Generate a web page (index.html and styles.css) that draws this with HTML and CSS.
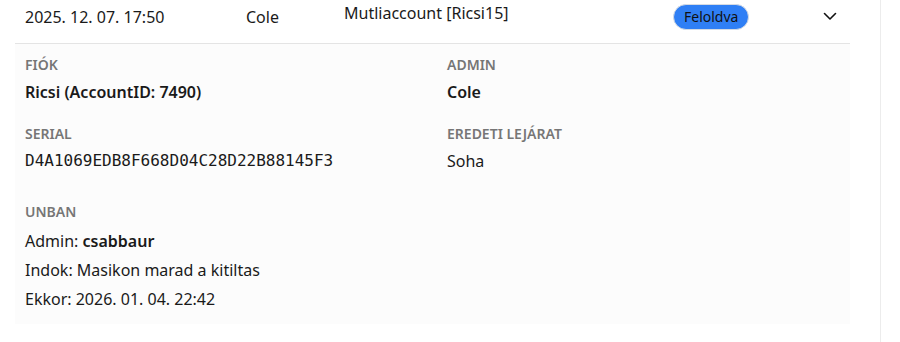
FILE: index.html
```html
<!DOCTYPE html>
<html lang="hu">
  <head>
    <meta charset="UTF-8" />
    <meta name="viewport" content="width=device-width, initial-scale=1.0" />
    <title>Kitiltások</title>
    <link rel="stylesheet" href="styles.css">
  </head>
  <body>
    <div class="page">
      <div class="ban-list">
        <div class="ban-row">
          <div class="cell">2025. 12. 07. 17:50</div>
          <div class="cell">Cole</div>
          <div class="cell reason">Mutliaccount [Ricsi15]</div>
          <div class="cell status"><span class="badge">Feloldva</span></div>
          <div class="cell toggle">
            <svg width="16" height="16" viewBox="0 0 16 16" fill="none" stroke="#111" stroke-width="1.6" stroke-linecap="round" stroke-linejoin="round">
              <path d="M2.5 5.5l5.5 5.5 5.5-5.5" />
            </svg>
          </div>
        </div>

        <div class="ban-details">
          <div class="detail-grid">
            <div class="field">
              <div class="label">Fiók</div>
              <div class="value strong">Ricsi (AccountID: 7490)</div>
            </div>
            <div class="field">
              <div class="label">Admin</div>
              <div class="value strong">Cole</div>
            </div>
            <div class="field">
              <div class="label">Serial</div>
              <div class="value mono">D4A1069EDB8F668D04C28D22B88145F3</div>
            </div>
            <div class="field">
              <div class="label">Eredeti lejárat</div>
              <div class="value">Soha</div>
            </div>
          </div>

          <div class="unban">
            <div class="label">Unban</div>
            <div class="line">Admin: <strong>csabbaur</strong></div>
            <div class="line">Indok: Masikon marad a kitiltas</div>
            <div class="line">Ekkor: 2026. 01. 04. 22:42</div>
          </div>
        </div>
      </div>
    </div>
  </body>
</html>
```

FILE: styles.css
```css
body {
  margin: 0;
  font-family: "Noto Sans", "Open Sans", sans-serif;
  font-size: 16px;
  color: #1a1a1a;
  background-color: #fff;
}

.page {
  width: 880px;
  height: 342px;
  border-right: 1px solid #ececec;
}

.ban-list {
  padding: 0 30px 0 15px;
}

.ban-row {
  display: grid;
  grid-template-columns: 221px 98px 329px 149px 1fr;
  height: 43px;
  border-bottom: 1px solid #e4e4e4;
}

.cell {
  padding: 5px 10px 0;
  line-height: 24px;
}

.cell.reason {
  padding-top: 1px;
}

.cell.status {
  padding-top: 4px;
}

.badge {
  display: block;
  width: fit-content;
  padding: 0 10px;
  font-size: 14px;
  line-height: 24px;
  color: #111;
  background-color: #2f7ff5;
  border: 1px solid #d6dbe3;
  border-radius: 13px;
}

.toggle {
  padding-top: 8px;
}

.toggle svg {
  display: block;
}

.ban-details {
  background-color: #fcfcfc;
  padding: 12px 10px 10px;
}

.detail-grid {
  display: grid;
  grid-template-columns: 393px 1fr;
  column-gap: 29px;
  row-gap: 21px;
}

.label {
  font-size: 14px;
  font-weight: 600;
  text-transform: uppercase;
  color: #767676;
  line-height: 18px;
}

.value {
  margin-top: 6px;
  line-height: 24px;
}

.value.strong {
  font-weight: 600;
}

.value.mono {
  font-family: "DejaVu Sans Mono", monospace;
  font-size: 16px;
  line-height: 24px;
}

.unban {
  margin-top: 30px;
}

.unban .label {
  margin-bottom: 6px;
}

.line {
  line-height: 29px;
}

.line strong {
  font-weight: 600;
}
```
